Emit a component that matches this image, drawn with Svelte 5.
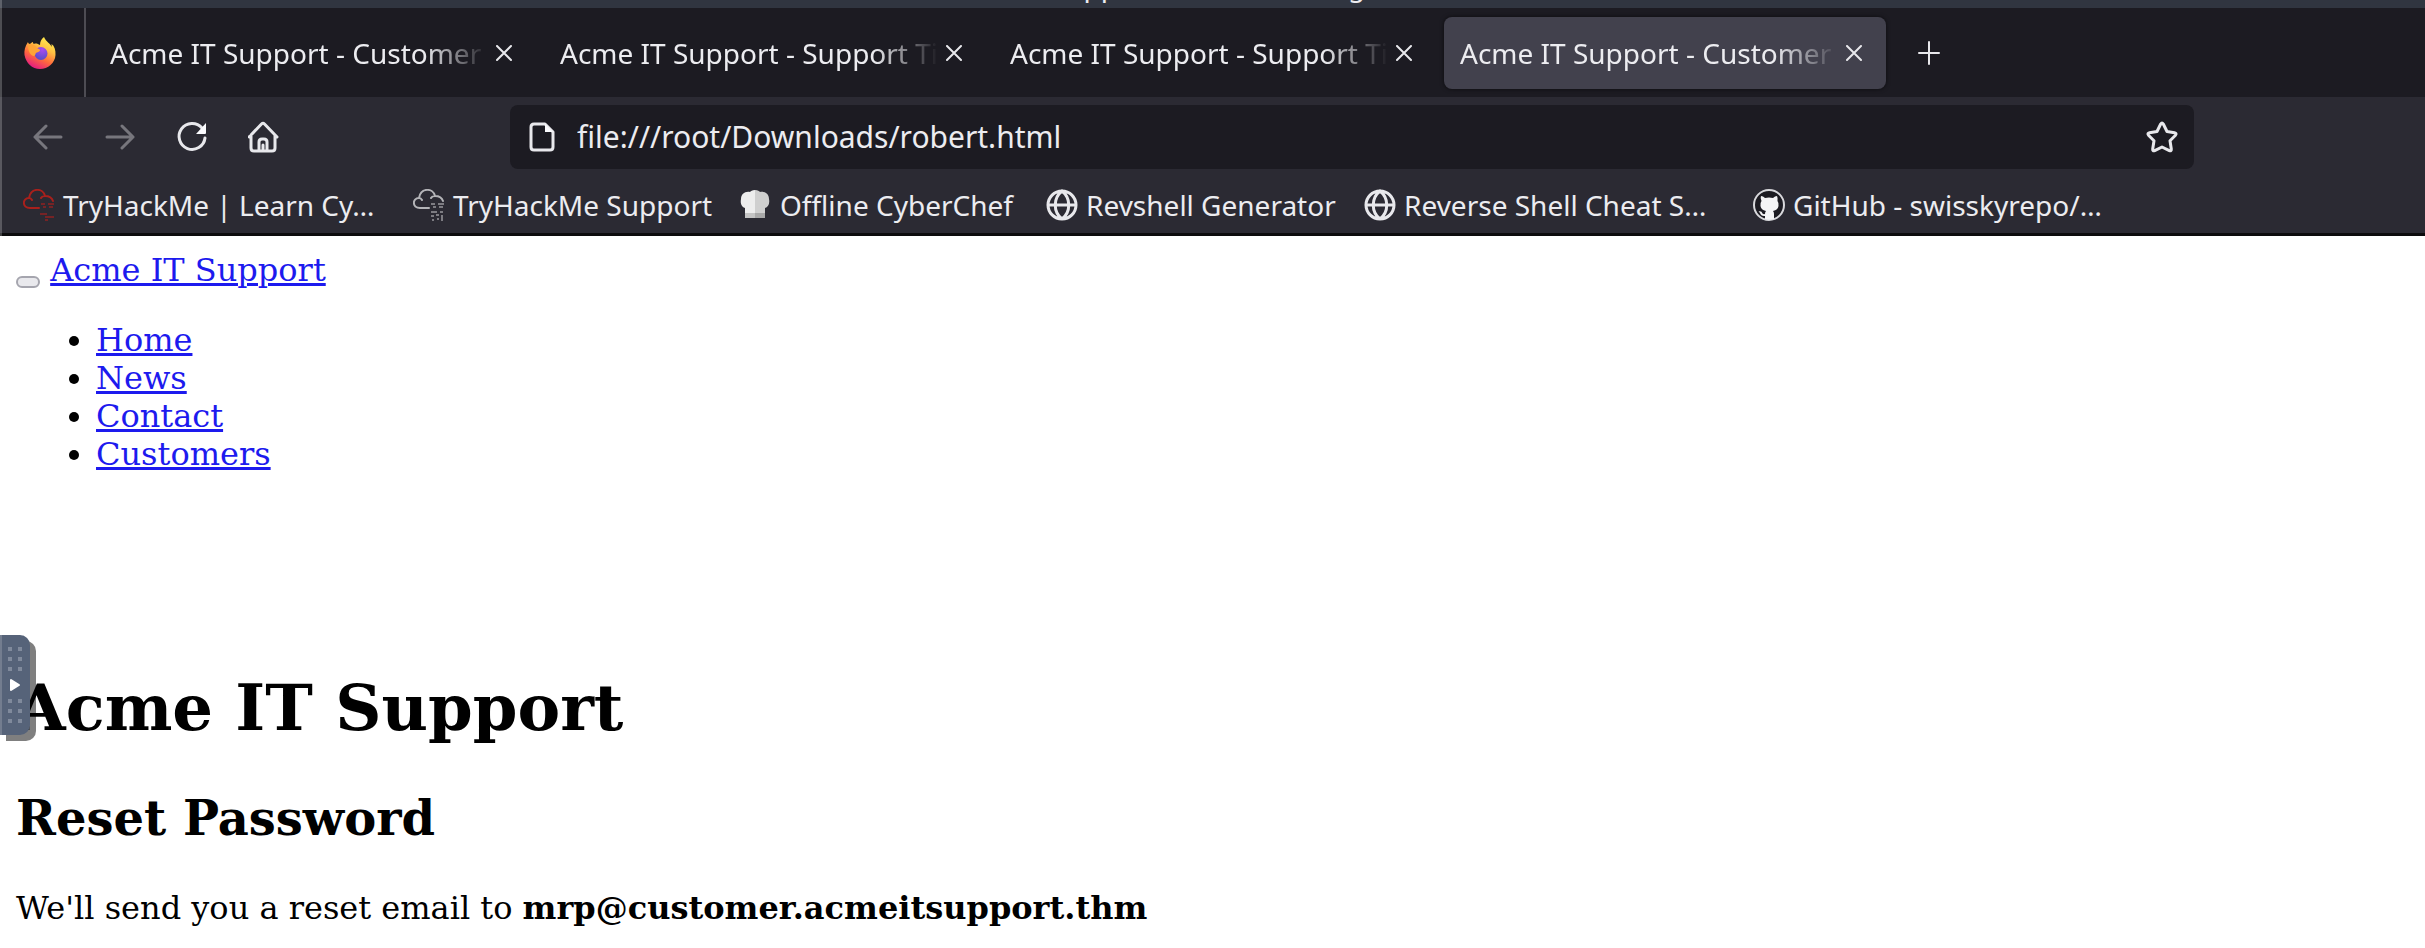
<script>
  const tabs = [
    { title: 'Acme IT Support - Customer Login', active: false },
    { title: 'Acme IT Support - Support Tickets', active: false },
    { title: 'Acme IT Support - Support Tickets', active: false },
    { title: 'Acme IT Support - Customer Login', active: true }
  ];
  const bookmarks = [
    { icon: 'thm', label: 'TryHackMe | Learn Cy…' },
    { icon: 'thmGrey', label: 'TryHackMe Support' },
    { icon: 'chef', label: 'Offline CyberChef' },
    { icon: 'globe', label: 'Revshell Generator' },
    { icon: 'globe', label: 'Reverse Shell Cheat S…' },
    { icon: 'github', label: 'GitHub - swisskyrepo/…' }
  ];
  const links = ['Home', 'News', 'Contact', 'Customers'];
  let url = 'file:///root/Downloads/robert.html';
</script>

<div class="window">
  <div class="titlebar"><span>Acme IT Support - Customer Login</span></div>

  <div class="tabstrip">
    <button class="firefox" aria-label="Firefox View">
      <svg width="32" height="32" viewBox="0 0 32 32">
        <defs>
          <linearGradient id="flame" x1="0.8" y1="0" x2="0.3" y2="1">
            <stop offset="0" stop-color="#fff44f" />
            <stop offset="0.35" stop-color="#ffc043" />
            <stop offset="0.65" stop-color="#ff6a3c" />
            <stop offset="1" stop-color="#e31587" />
          </linearGradient>
          <radialGradient id="orb" cx="0.6" cy="0.2" r="0.9">
            <stop offset="0" stop-color="#a94bf0" />
            <stop offset="1" stop-color="#4a4ec4" />
          </radialGradient>
        </defs>
        <path fill="url(#flame)" d="M4 5C1 9 0 14 .5 18 2 26 8 32 16 32s15-6 15.500-14c.3-5-1-9-4-11l.3 3C27 7 22 5 20 0c-3 2-4 5-4 8-2-1-4-2-6-1-1-.5-1-1-1-2-1 0-2 1-3 2C5 7 4 6 4 5z" />
        <circle cx="17" cy="16.500" r="6.500" fill="url(#orb)" />
        <path fill="#ffa436" d="M4 8c4-2 7 0 9 3 1 1 3 1 3 2 0 2-3 2-4 3-1 1 0 2-2 3-3 0-6-4-6-11z" />
      </svg>
    </button>
    <div class="tabs">
      {#each tabs as tab}
        <div class="tab" class:active={tab.active}>
          <button class="title">{tab.title}</button>
          <button class="close" aria-label="Close tab">
            <svg width="16" height="16" viewBox="0 0 16 16"><path d="M1 1l14 14M15 1L1 15" /></svg>
          </button>
        </div>
      {/each}
    </div>
    <button class="plus" aria-label="New tab">
      <svg width="24" height="24" viewBox="0 0 24 24"><path d="M12 1v22M2 12h20" /></svg>
    </button>
  </div>

  <div class="toolbar">
    <div class="nav">
      <button class="dim" aria-label="Back">
        <svg width="32" height="32" viewBox="0 0 32 32"><path d="M29 16H3M14 5L3 16l11 11" /></svg>
      </button>
      <button class="dim" aria-label="Forward">
        <svg width="32" height="32" viewBox="0 0 32 32"><path d="M3 16h26M18 5l11 11-11 11" /></svg>
      </button>
      <button aria-label="Reload">
        <svg width="32" height="32" viewBox="0 0 32 32"><path d="M26 7A13 13 0 1 0 29 17" /><path class="filled" d="M30 2v10q0 1-1 1H20z" /></svg>
      </button>
      <button aria-label="Home">
        <svg width="32" height="32" viewBox="0 0 32 32"><path d="M1 16L13.500 3q1.500-1.500 3 0L29 16M3 14v13q0 3 3 3h18q3 0 3-3V14M11 30v-9q0-3 3-3h2q3 0 3 3v9M15 24v6" /></svg>
      </button>
    </div>
    <div class="urlbar">
      <svg width="26" height="32" viewBox="0 0 26 32"><path d="M5 3h11l8 8v15q0 3-3 3H5q-3 0-3-3V6q0-3 3-3z" /><path class="filled" d="M16 3v8h8z" /></svg>
      <input aria-label="Address" bind:value={url} spellcheck="false" />
      <button aria-label="Bookmark this page">
        <svg width="32" height="32" viewBox="0 0 32 32"><path d="M14.700 3q1.300-2 2.600 0l3.700 7.500 7.500 1.200q2.500.5 1 2.500l-5.500 5.500 1.300 8.300q.2 2.500-2 1.600L16 26l-7.300 3.600q-2.200.9-2-1.600L8 19.700 2.500 14.200q-1.500-2 1-2.500L11 10.500z" /></svg>
      </button>
    </div>
  </div>

  <nav class="bookmarks">
    {#each bookmarks as mark}
      <a href="#top">
        {#if mark.icon === 'globe'}
          <svg class="globe" width="32" height="32" viewBox="0 0 32 32"><path d="M16 2a14 14 0 1 0 0 28a14 14 0 1 0 0-28M2 16h28M16 2c-9 7-9 21 0 28M16 2c9 7 9 21 0 28" /></svg>
        {:else if mark.icon === 'chef'}
          <svg class="solid" width="32" height="32" viewBox="0 0 32 32">
            <path fill="#ededed" d="M15 1c-3 0-4 1-5 2C5 2 1 5 1 10c-1 5 1 8 4 9v9h10z" />
            <path fill="#cfcfcf" d="M15 1c3 0 4 1 5 2 5-1 9 2 9 7 1 5-1 8-4 9v9H15z" />
            <path fill="#c4c4c4" d="M5 24h10v5H5z" /><path fill="#a8a8a8" d="M15 24h10v5H15z" />
          </svg>
        {:else if mark.icon === 'github'}
          <svg class="solid" width="32" height="32" viewBox="0 0 32 32">
            <circle cx="16" cy="16" r="15" fill="#1c1b22" stroke="#d8d8dc" stroke-width="2" />
            <path fill="#f4f4f6" d="M8 7q2 0 4 2q4-1 8 0q2-2 4-2q1 2 .5 5q1.500 2 1 5q-.5 4-5.500 5q1 1 1 3v5q-5 1.500-9 0v-3q-4 .5-5-3q-.5-1-1.500-1.500q3-1 4 2q1 1 2.500.5q0-2 1-3q-5-1-5.500-5q-.5-3 1-5Q7 9 8 7z" />
          </svg>
        {:else}
          <svg width="32" height="32" viewBox="0 0 32 32" class:red={mark.icon === 'thm'} class:grey={mark.icon === 'thmGrey'}>
            <path d="M16 19H7C-1 19-1 9 6 9q2 0 3 2M6 9C8-2 20-1 22 7c5 0 7 2 8 5M18 9q1-2 4-2" />
            <path class="bits" d="M18 15h4M25 15h6M20 18h3M26 18h4" />
            {#if mark.icon === 'thm'}
              <path class="bits" d="M17 25h7M22 28h9M22 31h3" />
            {:else}
              <path class="bits" d="M18 23h6M27 23h3M18 27h3M23 26h3M29 26v6M19 31h2M24 30h2" />
            {/if}
          </svg>
        {/if}
        <span>{mark.label}</span>
      </a>
    {/each}
  </nav>

  <main>
    <div class="brand"><button aria-label="Toggle navigation"></button> <a href="#top">Acme IT Support</a></div>
    <ul>
      {#each links as link}
        <li><a href="#top">{link}</a></li>
      {/each}
    </ul>
    <h1>Acme IT Support</h1>
    <h2>Reset Password</h2>
    <p>We'll send you a reset email to <strong>mrp@customer.acmeitsupport.thm</strong></p>
  </main>

  <button class="handle" aria-label="Open control bar">
    <svg width="30" height="100" viewBox="0 0 30 100">
      {#each [12, 22, 32, 64, 74, 84] as y}
        <rect x="8" {y} width="4" height="4" /><rect x="18" {y} width="4" height="4" />
      {/each}
      <path d="M11 45v10l8-5z" />
    </svg>
  </button>
</div>

<style>
  :global(body) { margin: 0; background: #fff; }
  .window {
    position: relative;
    min-height: 100vh;
    overflow: hidden;
    font-family: "Noto Sans", sans-serif;
    font-size: 28px;
    line-height: 36px;
    color: #ececf0;
  }
  .window::before {
    content: "";
    position: absolute;
    left: 0;
    top: 0;
    width: 2px;
    height: 236px;
    background: rgba(255, 255, 255, 0.22);
  }
  button {
    border: 0;
    padding: 0;
    margin: 0;
    background: none;
    font: inherit;
    color: inherit;
  }
  svg { display: block; flex: none; fill: none; stroke: #e8e8ec; stroke-width: 2; stroke-linecap: round; stroke-linejoin: round; }
  .titlebar {
    height: 8px;
    overflow: hidden;
    display: flex;
    align-items: flex-end;
    padding-left: 938px;
    background: #303540;
    line-height: 46px;
  }
  .tabstrip { display: flex; align-items: center; height: 89px; background: #1c1b22; }
  .firefox {
    display: flex;
    align-items: center;
    align-self: stretch;
    padding: 0 28px 0 24px;
    border-right: 2px solid #4d4c53;
  }
  .firefox svg { stroke: none; }
  .tabs { display: flex; gap: 8px; padding: 0 8px; }
  .tab {
    display: flex;
    align-items: center;
    box-sizing: border-box;
    width: 442px;
    height: 72px;
    padding: 0 24px 0 16px;
    border-radius: 8px;
  }
  .tab.active { background: #42414d; box-shadow: 0 0 4px rgba(0, 0, 0, 0.6); }
  .title {
    flex: 1;
    min-width: 0;
    margin-right: 8px;
    overflow: hidden;
    white-space: nowrap;
    text-align: left;
    mask-image: linear-gradient(to right, #000 calc(100% - 64px), transparent);
  }
  .plus { margin-left: 23px; }
  .toolbar { display: flex; align-items: center; height: 80px; background: #2b2a33; }
  .nav { display: flex; flex: none; box-sizing: border-box; width: 510px; gap: 40px; padding-left: 32px; }
  .nav svg, .urlbar svg { stroke-width: 3; }
  .nav .dim { opacity: 0.4; }
  .filled { fill: #fbfbfe; stroke: none; }
  .urlbar {
    display: flex;
    align-items: center;
    flex: 1;
    box-sizing: border-box;
    height: 64px;
    margin-right: 231px;
    padding: 0 16px 0 19px;
    gap: 22px;
    background: #1c1b22;
    border-radius: 8px;
  }
  .urlbar input {
    flex: 1;
    border: 0;
    padding: 0;
    outline: 0;
    background: none;
    color: inherit;
    font: inherit;
    font-size: 30px;
  }
  .bookmarks {
    display: grid;
    grid-template-columns: 390px 327px 306px 318px 389px auto;
    align-items: center;
    height: 56px;
    padding-left: 23px;
    background: #2b2a33;
    border-bottom: 3px solid #0c0c0d;
  }
  .bookmarks a { display: flex; align-items: center; gap: 8px; color: inherit; text-decoration: none; white-space: nowrap; }
  .bookmarks .globe { stroke-width: 3; }
  .bookmarks .solid { stroke: none; }
  .bookmarks .red { stroke: #a8201c; }
  .bookmarks .grey { stroke: #b4b4b8; }
  .bits { stroke-linecap: butt; opacity: 0.6; }
  main {
    padding: 15px 16px;
    color: #000;
    font-family: "DejaVu Serif", serif;
    font-size: 32px;
    line-height: 38px;
  }
  main a { color: #1d1aee; text-decoration: underline; }
  .brand button {
    width: 24px;
    height: 12px;
    border: 2px solid #a5a5ae;
    border-radius: 6px;
    background: #e9e9ed;
    vertical-align: -5px;
  }
  ul { margin: 32px 0 197px; padding-left: 80px; }
  h1 { margin: 0 0 43px; font-size: 64px; line-height: 76px; }
  h2 { margin: 0 0 42px; font-size: 48px; line-height: 58px; }
  p { margin: 0; }
  .handle {
    position: absolute;
    left: 0;
    top: 635px;
    background: #566379;
    border-radius: 0 10px 10px 0;
    box-shadow: inset 2px 0 #737d8f, 6px 6px 0 rgba(0, 0, 0, 0.5);
  }
  .handle rect { fill: #808a9c; stroke: none; }
  .handle path { fill: #fff; stroke: #fff; }
</style>
